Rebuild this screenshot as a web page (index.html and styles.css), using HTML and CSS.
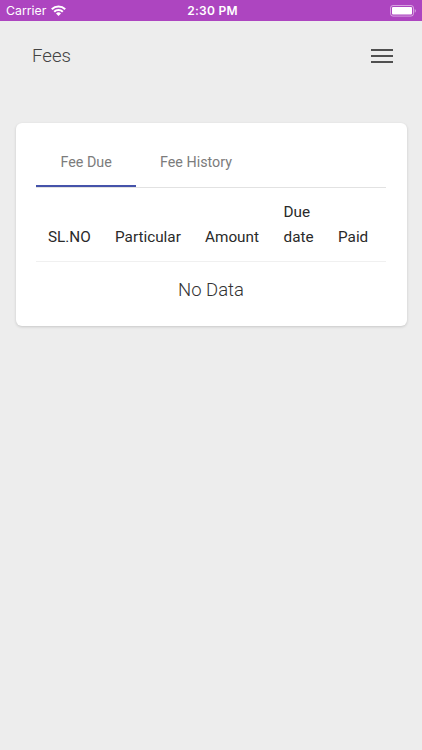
FILE: index.html
```html
<!DOCTYPE html>
<html lang="en">
<head>
<meta charset="utf-8">
<title>Fees</title>
<link rel="stylesheet" href="styles.css">
</head>
<body>
<div class="status">
  <div class="carrier"><span>Carrier</span>
    <svg width="15" height="11" viewBox="0 0 15 11" fill="none" stroke="#fff" stroke-width="2.1"><path d="M.8 4.2a9.6 9.6 0 0 1 13.4 0M3.2 6.8a6.2 6.2 0 0 1 8.6 0"/><path d="M7.5 11 5 8.5a3.6 3.6 0 0 1 5 0z" fill="#fff" stroke="none"/></svg>
  </div>
  <div class="time">2:30 PM</div>
  <svg class="battery" width="27" height="12" viewBox="0 0 27 12"><rect x=".5" y=".5" width="23" height="10.6" rx="2.5" fill="none" stroke="#fff" stroke-opacity=".5"/><rect x="2" y="2" width="20" height="7.6" rx="1" fill="#fff"/><path d="M24.7 4v3.7c1.6-.5 1.6-3.2 0-3.7z" fill="#fff" fill-opacity=".5"/></svg>
</div>
<header class="header">
  <h1>Fees</h1>
  <svg width="22" height="16" viewBox="0 0 22 16" stroke="#505050" stroke-width="2"><path d="M0 2h22M0 8h22M0 14h22"/></svg>
</header>
<main class="card">
  <nav class="tabs"><div class="tab active">Fee Due</div><div class="tab">Fee History</div></nav>
  <table>
    <thead><tr><th>SL.NO</th><th>Particular</th><th>Amount</th><th>Due date</th><th>Paid</th></tr></thead>
  </table>
  <p class="empty">No Data</p>
</main>
</body>
</html>
```
FILE: styles.css
```css
* { box-sizing: border-box; }
body { margin: 0; min-height: 750px; background: #ededed; font-family: Roboto, sans-serif; color: #212121; }
.status { height: 21px; background: #ad45c0; color: #fff; display: grid; grid-template-columns: 1fr auto 1fr; align-items: center; padding: 0 5px 0 6px; font: 12.3px/21px Inter, sans-serif; }
.carrier { display: flex; align-items: center; gap: 5px; }
.carrier span { padding-top: 1px; line-height: 20px; }
.time { padding: 1px 0 0 2px; line-height: 20px; font-size: 12px; font-weight: 600; letter-spacing: .25px; }
.battery { justify-self: end; }
.header { height: 70px; display: flex; align-items: center; justify-content: space-between; padding: 0 29px 0 32px; }
h1 { margin: 0; font-size: 18.6px; font-weight: 300; letter-spacing: 0; color: #444; }
.card { margin: 32px 15.5px 0; height: 203px; padding: 13px 20.5px 0; background: #fff; border-radius: 6px; box-shadow: 0 1px 3px rgba(0,0,0,.16); }
.tabs { display: flex; height: 52px; border-bottom: 1px solid #e2e2e2; }
.tab { padding: 0 24.5px; font-size: 14.3px; line-height: 52px; color: #7c7c7c; height: 51px; }
.tab:last-child { padding-left: 24px; }
.active { border-bottom: 2px solid #4553aa; width: 100px; white-space: nowrap; }
table { width: 100%; height: 74px; border-collapse: collapse; table-layout: fixed; }
th { padding: 0 12px 12px; text-align: left; vertical-align: bottom; font-size: 15.3px; font-weight: 400; line-height: 24.5px; color: #2a2a2a; border-bottom: 1px solid #f0f0f0; }
th:nth-child(1) { width: 67px; }
th:nth-child(2) { width: 90px; }
th:nth-child(3) { width: 78.5px; }
th:nth-child(4) { width: 54.5px; }
.empty { margin: 16px 0 0; text-align: center; font-size: 18.5px; line-height: 24px; font-weight: 300; color: #333; }
```
